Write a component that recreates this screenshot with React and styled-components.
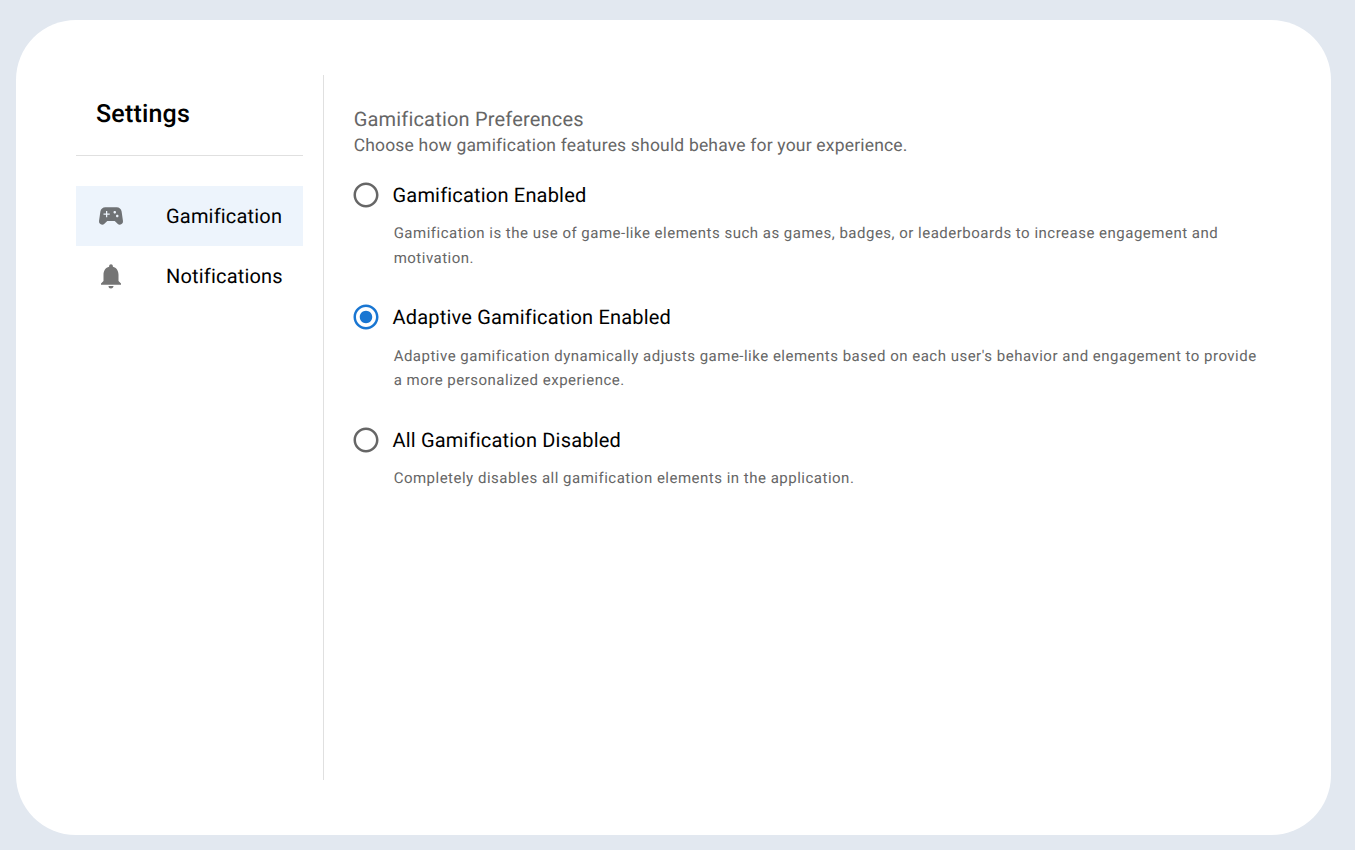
import React from "react";
import styled, { createGlobalStyle } from "styled-components";
import { MdNotifications, MdRadioButtonUnchecked, MdRadioButtonChecked } from "react-icons/md";

const GlobalStyle = createGlobalStyle`
  * { box-sizing: border-box; }
  body {
    margin: 0;
    background: #e2e8f0;
    font-family: Roboto, sans-serif;
    color: #000;
    text-rendering: geometricPrecision;
  }
`;

const Page = styled.main`
  height: 850px;
  padding: 20px 24px 15px 16px;
`;

const Card = styled.div`
  display: flex;
  height: 815px;
  padding: 55px 60px;
  border-radius: 60px;
  background: #fff;
`;

const Sidebar = styled.aside`
  width: 248px;
  padding-right: 20px;
  flex-shrink: 0;
  border-right: 1px solid #e0e0e0;
`;

const Title = styled.h1`
  margin: 0;
  height: 81px;
  padding: 20px 20px 0;
  border-bottom: 1px solid #e0e0e0;
  font-size: 25px;
  font-weight: 500;
  line-height: 40px;
  letter-spacing: 0.0075em;
`;

const Nav = styled.nav`
  padding-top: 30px;
`;

const NavItem = styled.a`
  display: flex;
  align-items: center;
  height: 60px;
  padding-left: 20px;
  background: ${({ $active }) => ($active ? "#edf4fc" : "transparent")};
  font-size: 20px;
  letter-spacing: 0.00938em;
  white-space: nowrap;
`;

const NavIcon = styled.span`
  display: flex;
  width: 70px;
  color: ${({ $active }) => ($active ? "#6f7275" : "#757575")};
`;

const Content = styled.section`
  flex: 1;
  min-width: 0;
  padding: 30px 10px 0 29.64px;
`;

const Heading = styled.h2`
  margin: 0;
  font-size: 20px;
  font-weight: 400;
  line-height: 28px;
  letter-spacing: 0.0092em;
  color: #666;
`;

const Subtitle = styled.p`
  margin: 0 0 9.75px;
  padding-top: 1px;
  font-size: 17.5px;
  line-height: 25px;
  letter-spacing: 0.0105em;
  color: #666;
`;

const Option = styled.div`
  margin-bottom: 20px;
`;

const OptionLabel = styled.label`
  display: flex;
  align-items: center;
  height: 52.5px;
  margin-left: -2.39px;
  gap: 11.25px;
  font-size: 20px;
  letter-spacing: 0.00938em;
`;

const RadioIcon = styled.span`
  display: flex;
  color: ${({ $checked }) => ($checked ? "#1976d2" : "#666")};
`;

const Description = styled.p`
  margin: 0;
  padding-left: 40px;
  font-size: 15px;
  line-height: 24.9px;
  letter-spacing: 0.0332em;
  color: #666;
`;

const GamepadIcon = () => (
  <svg width="30" height="30" viewBox="0 0 24 24" fill="currentColor">
    <path d="m21.58 16.09-1.09-7.66C20.21 6.46 18.52 5 16.53 5H7.47C5.48 5 3.79 6.46 3.51 8.43l-1.09 7.66C2.2 17.63 3.39 19 4.94 19c.68 0 1.32-.27 1.8-.75L9 16h6l2.25 2.25c.48.48 1.13.75 1.8.75 1.56 0 2.75-1.37 2.53-2.91zM11 11H9v2H8v-2H6v-1h2V8h1v2h2v1zm4-1c-.55 0-1-.45-1-1s.45-1 1-1 1 .45 1 1-.45 1-1 1zm2 3c-.55 0-1-.45-1-1s.45-1 1-1 1 .45 1 1-.45 1-1 1z" />
  </svg>
);

const options = [
  { label: "Gamification Enabled", text: "Gamification is the use of game-like elements such as games, badges, or leaderboards to increase engagement and motivation." },
  { label: "Adaptive Gamification Enabled", checked: true, text: "Adaptive gamification dynamically adjusts game-like elements based on each user's behavior and engagement to provide a more personalized experience." },
  { label: "All Gamification Disabled", text: "Completely disables all gamification elements in the application." },
];

export default function App() {
  return (
    <Page>
      <GlobalStyle />
      <Card>
        <Sidebar>
          <Title>Settings</Title>
          <Nav>
            <NavItem $active><NavIcon $active><GamepadIcon /></NavIcon>Gamification</NavItem>
            <NavItem><NavIcon><MdNotifications size={30} /></NavIcon>Notifications</NavItem>
          </Nav>
        </Sidebar>
        <Content>
          <Heading>Gamification Preferences</Heading>
          <Subtitle>Choose how gamification features should behave for your experience.</Subtitle>
          {options.map((o) => (
            <Option key={o.label}>
              <OptionLabel>
                <RadioIcon $checked={o.checked}>
                  {o.checked ? <MdRadioButtonChecked size={30} /> : <MdRadioButtonUnchecked size={30} />}
                </RadioIcon>
                {o.label}
              </OptionLabel>
              <Description>{o.text}</Description>
            </Option>
          ))}
        </Content>
      </Card>
    </Page>
  );
}
